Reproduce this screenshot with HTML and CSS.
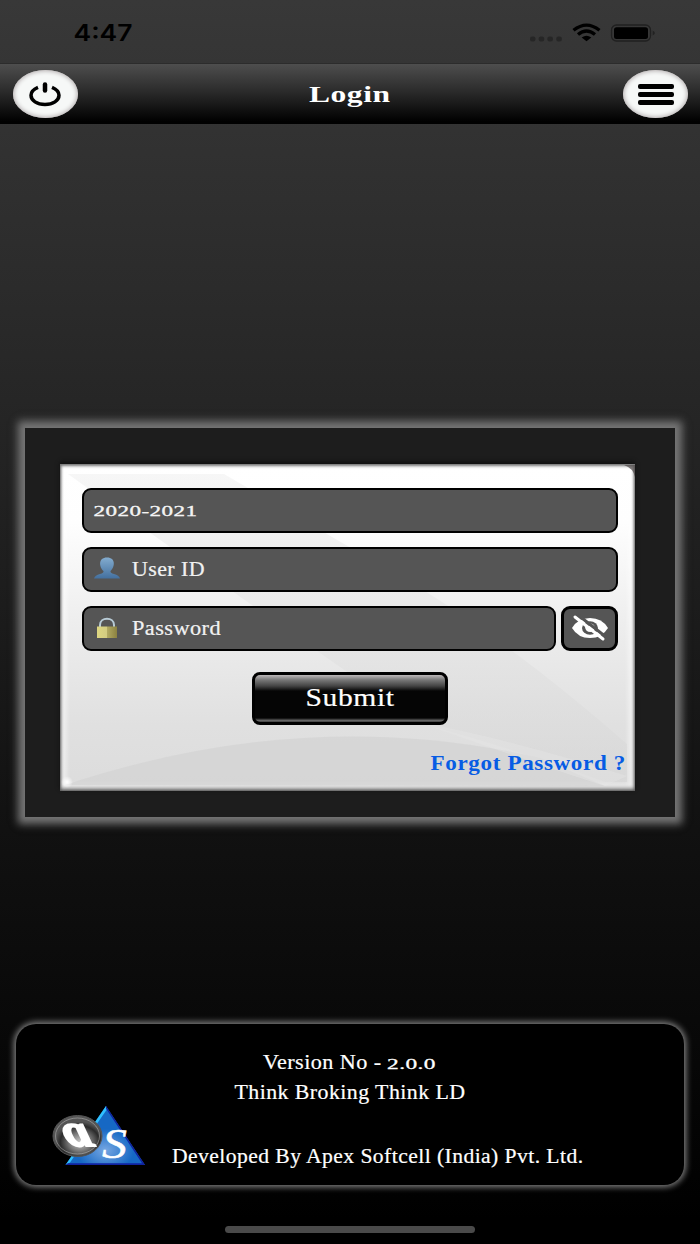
FILE: index.html
```html
<!DOCTYPE html>
<html lang="en">
<head>
<meta charset="utf-8">
<title>Login</title>
<link rel="stylesheet" href="styles.css">
</head>
<body>
<div class="screen">
  <div class="status">
    <svg class="clock" width="60" height="24"><text class="time" x="-0.500" y="20" textLength="59" lengthAdjust="spacingAndGlyphs">4:47</text></svg>
    <svg class="signals" width="128" height="24" viewBox="0 0 128 24">
      <g fill="#262626"><rect x="0" y="15.500" width="5.500" height="5" rx="2"/><rect x="8.700" y="15.500" width="5.500" height="5" rx="2"/><rect x="17.400" y="15.500" width="5.500" height="5" rx="2"/><rect x="26.300" y="15.500" width="5.500" height="5" rx="2"/></g>
      <g fill="none" stroke="#000" stroke-width="3.300"><path d="M43.500 9.300Q56.500-1 69.500 9.300"/><path d="M48 13.500Q56.500 6.500 65 13.500"/></g>
      <path d="M51.700 16.500Q56.500 13 61.300 16.500L56.500 20.300Z"/>
      <rect x="81.500" y="4" width="39" height="16" rx="5" fill="none" stroke="#202020" stroke-width="1.300"/>
      <rect x="84" y="6.300" width="34" height="11.700" rx="2.500"/>
      <path d="M122.700 9.500Q127 12 122.700 14.500Z" fill="#222"/>
    </svg>
  </div>
  <header class="bar">
    <div class="round">
      <svg width="34" height="26" viewBox="0 0 34 26" fill="none" stroke="#000" stroke-linecap="butt"><path d="M9 6.300C5 8 2 10.500 2 14.300C2 19.500 8 23.500 16 23.500S30 19.500 30 14.300C30 10.500 27 8 23 6.300" stroke-width="3.500"/><path d="M16 3.500V9.500" stroke-width="4.500" stroke-linecap="round"/></svg>
    </div>
    <svg width="82" height="30"><text class="title" x="-1" y="22.500" textLength="81.500" lengthAdjust="spacingAndGlyphs">Login</text></svg>
    <div class="round menu"><i></i><i></i><i></i></div>
  </header>
  <main class="panel">
    <form class="card">
      <svg class="sheen" width="575" height="328" viewBox="0 0 575 328">
        <defs>
          <linearGradient id="sh" x2="0" y2="1"><stop offset="0" stop-color="#f2f2f2"/><stop offset="1" stop-color="#d6d6d6"/></linearGradient>
          <radialGradient id="glint"><stop offset="0" stop-color="#fff"/><stop offset="1" stop-color="#fff" stop-opacity="0"/></radialGradient>
        </defs>
        <path d="M8 10H164Q210 37 310 95Q430 160 567 280V318H545Q440 280 362 260Q210 155 8 10Z" fill="url(#sh)" opacity=".65"/>
        <path d="M5 321Q250 240 480 294L545 322Z" fill="#d3d3d3" opacity=".72"/>
        <path d="M358 258Q470 298 545 322L567 312Q450 275 358 258Z" fill="#e6e6e6" opacity=".4"/>
        <circle cx="7" cy="318" r="6" fill="url(#glint)"/>
        <path d="M564 1H575V13Q573 4 564 1Z" fill="#4a4545" opacity=".7"/>
      </svg>
      <div class="field"><svg width="110" height="30"><text class="digits" x="-1.500" y="20.500" textLength="104" lengthAdjust="spacingAndGlyphs">2020-2021</text></svg></div>
      <div class="field">
        <svg class="icon" width="26" height="24" viewBox="0 0 26 24"><defs><linearGradient id="u" x2="0" y2="1"><stop offset="0" stop-color="#83accf"/><stop offset="1" stop-color="#43709f"/></linearGradient></defs><path d="M13 .5C4 .5 5 10 9.500 14Q10 16 6 17Q1 18 0 21.500H26Q25 18 20 17Q16 16 16.500 14C21 10 22 .5 13 .5Z" fill="url(#u)"/></svg>
        <svg width="90" height="30"><text class="label" x="0" y="21.500" textLength="73" lengthAdjust="spacingAndGlyphs">User ID</text></svg>
      </div>
      <div class="row">
        <div class="field password">
          <svg class="icon" width="26" height="24" viewBox="0 0 26 24"><defs><linearGradient id="l"><stop offset="0" stop-color="#ddd681"/><stop offset=".5" stop-color="#d3cc82"/><stop offset=".51" stop-color="#b2aa62"/><stop offset="1" stop-color="#8b8140"/></linearGradient></defs><path d="M6 11V9C6 .5 20 .5 20 9V11" fill="none" stroke="#b8cbd6" stroke-width="2"/><rect x="3" y="10.500" width="20" height="11.500" fill="url(#l)"/></svg>
          <svg width="96" height="30"><text class="label" x="0" y="21.500" textLength="89" lengthAdjust="spacingAndGlyphs">Password</text></svg>
        </div>
        <div class="eye">
          <svg width="36" height="26" viewBox="0 0 36 26"><path d="M0 13Q6 3 18 3T36 13Q30 23 18 23T0 13Z" fill="#fff"/><ellipse cx="18" cy="13" rx="8" ry="6.700" fill="#555"/><path d="M13 12Q13.500 17 18.500 17Q23 16.500 23 12.500Q22 8.500 18 8.500Q19 12 13 12Z" fill="#fff"/><path d="M6 0L34 22" stroke="#555" stroke-width="3"/><path d="M3 2L31 24" stroke="#fff" stroke-width="3" stroke-linecap="round"/></svg>
        </div>
      </div>
      <div class="submit"><svg width="90" height="32"><text class="send" x="0.500" y="24" textLength="89" lengthAdjust="spacingAndGlyphs">Submit</text></svg></div>
      <svg class="forgot" width="195" height="28"><text class="link" x="-0.500" y="20" textLength="195.500" lengthAdjust="spacingAndGlyphs">Forgot Password ?</text></svg>
    </form>
  </main>
  <footer class="about">
    <svg width="174" height="30"><text class="label" x="0" y="22" textLength="118.500" lengthAdjust="spacingAndGlyphs">Version No -</text><text class="digits" x="124" y="22" textLength="49" lengthAdjust="spacingAndGlyphs">2.0.0</text></svg>
    <svg width="232" height="30"><text class="label" x="0.500" y="22" textLength="231" lengthAdjust="spacingAndGlyphs">Think Broking Think LD</text></svg>
    <div class="maker">
      <svg width="96" height="64" viewBox="0 0 96 64">
        <defs>
          <radialGradient id="disc" cx=".55" cy=".65"><stop offset="0" stop-color="#ccc"/><stop offset=".45" stop-color="#777"/><stop offset=".8" stop-color="#2b2b2b"/><stop offset="1" stop-color="#555"/></radialGradient>
          <radialGradient id="tri" cx=".5" cy=".75" r=".6"><stop offset="0" stop-color="#76a7e2"/><stop offset=".6" stop-color="#1668c4"/></radialGradient>
        </defs>
        <path d="M54 2L13.500 61H93Z" fill="url(#tri)"/>
        <path d="M54 2L13.500 61L18 58.500L54.500 6Z" fill="#2fc0ff"/>
        <path d="M13.500 61H93L54 2L54 4.500L90 59.300H16Z" fill="#1022a0"/>
        <ellipse cx="25.500" cy="32" rx="24.500" ry="20.500" fill="url(#disc)" stroke="#555"/>
        <ellipse cx="25.500" cy="32" rx="22" ry="18" fill="none" stroke="#ccc" stroke-opacity=".45"/>
        <text class="mark" transform="translate(19 41.500) skewX(34)" textLength="27" lengthAdjust="spacingAndGlyphs">a</text>
        <text class="mark ess" x="50" y="53.500" textLength="25" lengthAdjust="spacingAndGlyphs">S</text>
      </svg>
      <svg width="412" height="30"><text class="label" x="-1" y="21.500" textLength="411.500" lengthAdjust="spacingAndGlyphs">Developed By Apex Softcell (India) Pvt. Ltd.</text></svg>
    </div>
  </footer>
  <div class="home"></div>
</div>
</body>
</html>
```
FILE: styles.css
```css
* { box-sizing: border-box; }
body { margin: 0; }
svg { display: block; flex: none; overflow: visible; }
text { font-family: "Liberation Serif", serif; fill: #fff; }

.screen {
  width: 700px; height: 1244px; overflow: hidden;
  display: flex; flex-direction: column; align-items: center;
  background: linear-gradient(#383838 0, #323232 130px, #262626 400px, #111 830px, #090909 1020px, #000 1220px);
}
.status { width: 100%; height: 63px; padding: 21px 42px 0 74px; display: flex; justify-content: space-between; }
.time { font: 600 23px Inter, sans-serif; fill: #000; }
.bar {
  width: 100%; height: 61px; padding: 0 12px 0 13px;
  display: flex; align-items: center; justify-content: space-between;
  background: linear-gradient(#4e4e4e, #292929 48%, #000 96%);
  border-top: 1px solid #2c2c2c;
}
.title { font-size: 24px; font-weight: 700; letter-spacing: .4px; }
.round {
  width: 65px; height: 48px; border-radius: 50%; background: #f6f8f7;
  box-shadow: inset 0 0 4px 1px #b5afb0;
  display: flex; align-items: center; justify-content: center;
}
.menu { flex-direction: column; gap: 3px; }
.menu i { width: 36px; height: 5px; border-radius: 2px; background: #000; }

.panel {
  width: 650px; height: 389px; margin-top: 303.500px; padding: 36px 40px 25px 35px;
  background: #1d1d1d; box-shadow: 0 0 8px 7px #767676;
}
.card {
  width: 575px; height: 327px; padding: 24px 17px 0 22px;
  position: relative; isolation: isolate;
  display: flex; flex-direction: column; gap: 13.500px;
  background: linear-gradient(#fff 0, #fefefe 18%, #eee 48%, #e0e0e0 80%, #dcdcdc);
  box-shadow: inset 0 3px 3px -1px #777, inset 0 -3px 4px -1px #555, inset 2px 0 3px -1px #777, inset -2px 0 3px -1px #777, inset 0 0 4px 7px rgba(255,255,255,.45), 0 -2px 4px #111;
}
.sheen { position: absolute; left: 0; top: 0; z-index: -1; }
.field {
  height: 45.500px; padding: 0 10.500px; border: 2px solid #000; border-radius: 9px; background: #555;
  display: flex; align-items: center;
}
.icon { margin: 0 12px 0 -1px; }
.row { display: flex; gap: 5px; }
.password { width: 474px; }
.eye {
  width: 57px; height: 45.500px; border: 3px solid #000; border-radius: 9px; background: #555;
  display: flex; align-items: center; justify-content: center;
}
.label { font-size: 20px; letter-spacing: .4px; stroke: #fff; stroke-width: .2px; }
.digits { font-size: 15.500px; letter-spacing: .3px; stroke: #fff; stroke-width: .3px; }
.field text { fill: #f0f0f0; }
.submit {
  width: 196px; height: 53px; margin: 7px 0 0 170px; border: 3px solid #000; border-radius: 8px;
  display: flex; align-items: center; justify-content: center;
  background: linear-gradient(#bcb8b9 0, #777 5px, #444 11px, #050505 16px, #050505 43px, #777 46px, #222 47px);
}
.send { font-size: 25.500px; letter-spacing: .5px; stroke: #fff; stroke-width: .2px; }
.forgot { margin: 11.500px 0 0 349px; }
.link { font-size: 21.500px; font-weight: 700; letter-spacing: .6px; fill: #075ce4; }

.about {
  width: 668px; height: 161px; margin-top: 207px; padding: 23px 0 0;
  border-radius: 20px; background: #000; box-shadow: 0 0 6px 2px #858585;
  display: flex; flex-direction: column; align-items: center;
}
.maker { align-self: stretch; padding-left: 36px; display: flex; align-items: flex-end; gap: 24.500px; height: 61px; }
.maker > svg:last-child { margin-bottom: -3px; }
.mark { font-size: 46px; font-style: italic; font-weight: 700; stroke: #fff; stroke-width: 2px; }
.ess { font-size: 43px; font-weight: 400; stroke-width: .500px; }
.home { width: 250px; height: 7px; margin-top: 41px; border-radius: 4px; background: #4a4a4a; }
```
